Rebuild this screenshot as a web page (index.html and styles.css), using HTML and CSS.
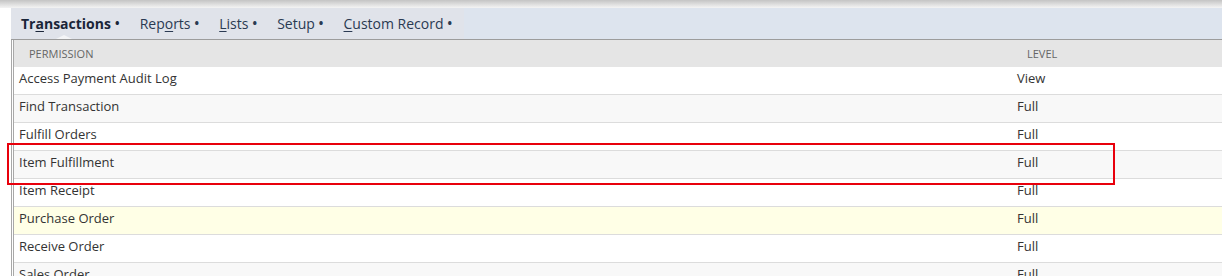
FILE: index.html
```html
<!DOCTYPE html>
<html>
<head>
<meta charset="utf-8">
<link rel="stylesheet" href="styles.css">
</head>
<body>
<div class="shade"></div>
<div class="page">
  <div class="tabbar">
    <div class="tabs">
      <span class="tab active">Tr<u>a</u>nsactions<span class="dot">•</span></span>
      <span class="tab">Rep<u>o</u>rts<span class="dot">•</span></span>
      <span class="tab"><u>L</u>ists<span class="dot">•</span></span>
      <span class="tab">Setup<span class="dot">•</span></span>
      <span class="tab"><u>C</u>ustom Record<span class="dot">•</span></span>
    </div>
  </div>
  <div class="grid">
    <div class="row head"><div class="cell">PERMISSION</div><div class="cell">LEVEL</div></div>
    <div class="row"><div class="cell">Access Payment Audit Log</div><div class="cell lvl">View</div></div>
    <div class="row alt"><div class="cell">Find Transaction</div><div class="cell lvl">Full</div></div>
    <div class="row"><div class="cell">Fulfill Orders</div><div class="cell lvl">Full</div></div>
    <div class="row alt"><div class="cell">Item Fulfillment</div><div class="cell lvl">Full</div></div>
    <div class="row"><div class="cell">Item Receipt</div><div class="cell lvl">Full</div></div>
    <div class="row hl"><div class="cell">Purchase Order</div><div class="cell lvl">Full</div></div>
    <div class="row"><div class="cell">Receive Order</div><div class="cell lvl">Full</div></div>
    <div class="row alt"><div class="cell">Sales Order</div><div class="cell lvl">Full</div></div>
  </div>
</div>
<div class="mark"></div>
</body>
</html>
```

FILE: styles.css
```css
html, body {
  margin: 0;
  padding: 0;
  background: #fff;
  font-family: "Open Sans", "Liberation Sans", sans-serif;
  overflow: hidden;
}
.shade {
  height: 8px;
  background: linear-gradient(#c4c4c4, #e6e6e6 70%, #f4f4f4);
}
.page {
  padding-left: 11px;
}
.tabbar {
  height: 31px;
  background: #dde4ee;
  border-bottom: 1px solid #9c9c9c;
  display: flex;
}
.tabs {
  display: flex;
  background: #e0e3ea;
  height: 31px;
  padding-right: 2px;
}
.tab {
  position: relative;
  display: flex;
  align-items: center;
  padding: 0 10px 0 10.2px;
  font-size: 14px;
  color: #2a3a52;
  white-space: nowrap;
}
.tab:first-child {
  padding-left: 10px;
}
.tab u {
  text-decoration-thickness: 1px;
  text-underline-offset: 2px;
}
.tab.active {
  font-weight: 700;
  color: #1a2538;
}
.tab.active::after {
  content: "";
  position: absolute;
  left: 45px;
  bottom: 0;
  border-left: 8px solid transparent;
  border-right: 8px solid transparent;
  border-bottom: 4px solid #f4f5f7;
}
.dot {
  font-weight: 700;
  font-size: 12px;
  margin-left: 4px;
}
.grid {
  border-left: 3px double #a8a8a8;
}
.row {
  display: grid;
  grid-template-columns: 998px 1fr;
  height: 27px;
  border-bottom: 1px solid #dcdcdc;
  font-size: 13px;
  color: #333;
  background: #fff;
}
.row.alt { background: #f8f8f8; }
.row.hl { background: #ffffe6; }
.row.head {
  background: #e5e5e5;
  border-bottom: none;
  height: 27px;
  font-size: 11px;
  color: #666;
}
.cell {
  display: flex;
  align-items: center;
  padding: 0 0 5px 5px;
  white-space: nowrap;
}
.row.head .cell {
  padding: 0 0 1px 15px;
}
.mark {
  position: absolute;
  left: 7px;
  top: 143px;
  width: 1104px;
  height: 38px;
  border: 2px solid #e8000c;
}
```
